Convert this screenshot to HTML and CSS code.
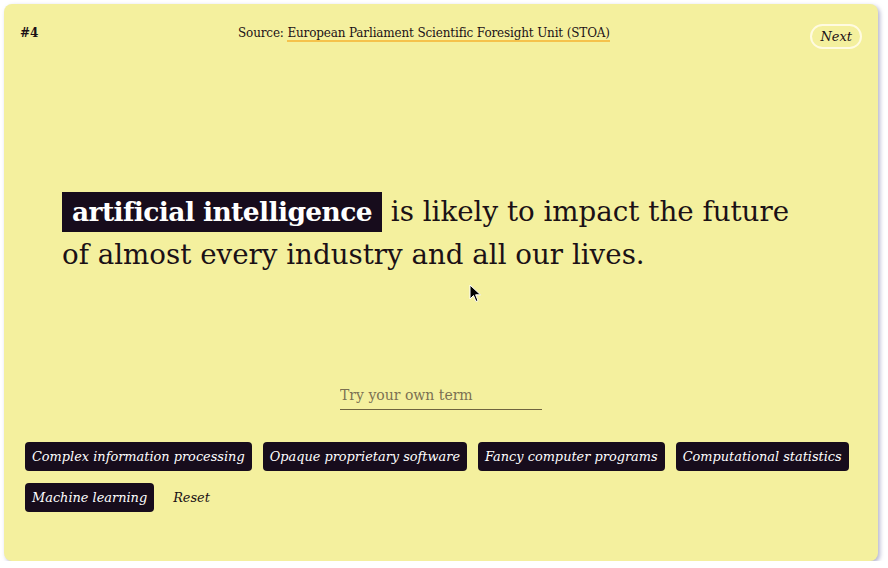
FILE: index.html
```html
<!DOCTYPE html>
<html lang="en">
<head>
  <meta charset="UTF-8" />
  <title>Term Swap</title>
  <link rel="stylesheet" href="styles.css">
</head>
<body>
  <div class="card">
    <div class="top-bar">
      <span class="count">#4</span>
      <span class="source">Source: <a href="#">European Parliament Scientific Foresight Unit (STOA)</a></span>
      <button class="next-btn">Next</button>
    </div>
    <div class="quote">
      <p><span class="term">artificial intelligence</span> is likely to impact the future of almost every industry and all our lives.</p>
    </div>
    <div class="own-term">
      <input type="text" placeholder="Try your own term">
    </div>
    <div class="chips">
      <button class="chip">Complex information processing</button>
      <button class="chip">Opaque proprietary software</button>
      <button class="chip">Fancy computer programs</button>
      <button class="chip">Computational statistics</button>
      <button class="chip">Machine learning</button>
      <button class="reset">Reset</button>
    </div>
    <svg class="pointer" width="14" height="20" viewBox="0 0 14 20">
      <path d="M1 1 L1 15 L4.5 11.5 L7 17.5 L9 16.6 L6.6 10.8 L11.5 10.8 Z" fill="#000" stroke="#fff" stroke-width="1"/>
    </svg>
  </div>
</body>
</html>
```

FILE: styles.css
```css
body {
  margin: 0;
  background: #fff;
  font-family: 'DejaVu Serif', serif;
}
.card {
  position: relative;
  margin: 4px 0 0 4px;
  width: 874px;
  height: 557px;
  box-sizing: border-box;
  background: #f4f09e;
  border-radius: 8px;
  box-shadow: 2px 2px 4px rgba(120, 120, 170, 0.55);
  padding: 12px 16px 0 16px;
  display: flex;
  flex-direction: column;
  color: #1b1116;
}
.top-bar {
  display: flex;
  align-items: flex-start;
  height: 34px;
}
.count {
  font-size: 12px;
  font-weight: bold;
  margin-top: 10px;
  width: 218px;
}
.source {
  font-size: 12px;
  letter-spacing: -0.15px;
  margin-top: 10px;
}
.source a {
  color: inherit;
  text-decoration: none;
  border-bottom: 2px solid #f5c24c;
}
.next-btn {
  font-family: inherit;
  font-style: italic;
  font-size: 13px;
  color: #1b1116;
  background: transparent;
  border: 2px solid #fffbe0;
  border-radius: 14px;
  padding: 3px 8px;
  margin: 8px 0 0 auto;
}
.quote {
  padding: 140px 0 0 42px;
  height: 184px;
}
.quote p {
  margin: 0;
  max-width: 740px;
  font-size: 27.7px;
  line-height: 43px;
}
.term {
  display: inline-block;
  background: #170c1c;
  color: #fff;
  font-weight: bold;
  font-size: 26.5px;
  letter-spacing: -0.6px;
  line-height: 40px;
  padding: 0 10px;
}
.own-term {
  display: flex;
  justify-content: center;
  margin-top: 9px;
}
.own-term input {
  font-family: inherit;
  font-size: 14px;
  width: 202px;
  background: transparent;
  border: none;
  border-bottom: 1px solid #6f6440;
  padding: 4px 0 6px;
  outline: none;
}
.own-term input::placeholder {
  color: #7b7052;
}
.chips {
  display: flex;
  flex-wrap: wrap;
  gap: 12px 11px;
  margin-top: 32px;
  padding-left: 5px;
}
.chip {
  font-family: inherit;
  font-style: italic;
  font-size: 12.9px;
  color: #fff;
  background: #170c1c;
  border: none;
  border-radius: 4px;
  height: 29px;
  padding: 0 7px;
}
.reset {
  font-family: inherit;
  font-style: italic;
  font-size: 12.9px;
  color: #1b1116;
  background: transparent;
  border: none;
  padding: 0 8px;
}
.pointer {
  position: absolute;
  left: 465px;
  top: 280px;
}
```
